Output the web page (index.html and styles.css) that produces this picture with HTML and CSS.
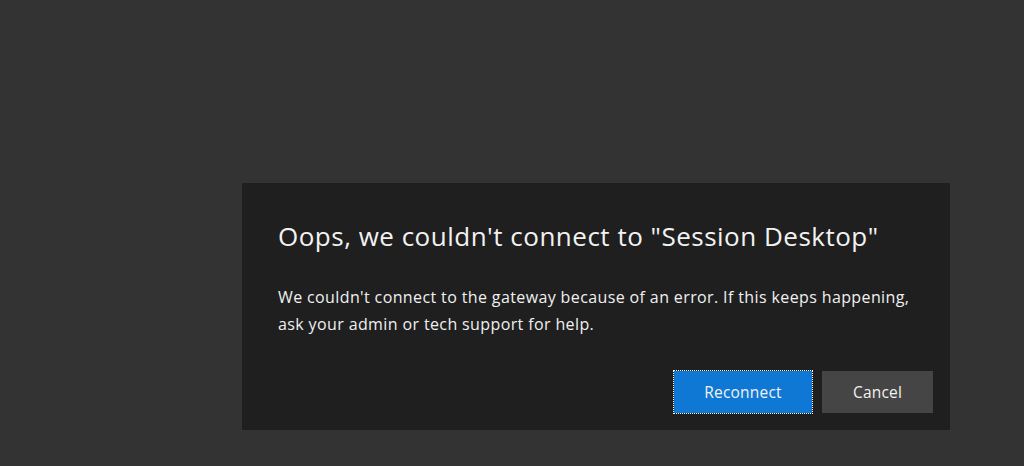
FILE: index.html
```html
<!DOCTYPE html>
<html lang="en">
<head>
<meta charset="utf-8">
<title>Connection error</title>
<link rel="stylesheet" href="styles.css">
</head>
<body>
<div class="stage">
  <div class="dialog" role="dialog" aria-labelledby="dlg-title">
    <h1 class="dialog-title" id="dlg-title">Oops, we couldn't connect to "Session Desktop"</h1>
    <p class="dialog-text">We couldn't connect to the gateway because of an error. If this keeps happening, ask your admin or tech support for help.</p>
    <div class="dialog-actions">
      <button class="btn btn-primary">Reconnect</button>
      <button class="btn btn-secondary">Cancel</button>
    </div>
  </div>
</div>
</body>
</html>
```

FILE: styles.css
```css
html, body {
  margin: 0;
  padding: 0;
  height: 100%;
}
body {
  background: #333333;
  font-family: "Open Sans", "Noto Sans", "Liberation Sans", sans-serif;
  overflow: hidden;
}
.stage {
  padding: 183px 0 0 242px;
}
.dialog {
  box-sizing: border-box;
  width: 708px;
  height: 247px;
  background: #1f1f1f;
  padding: 33px 36px 0 36px;
  display: flex;
  flex-direction: column;
}
.dialog-title {
  margin: 0;
  font-size: 26px;
  letter-spacing: 0.5px;
  font-weight: 400;
  color: #f2f2f2;
  line-height: 40px;
  white-space: nowrap;
}
.dialog-text {
  margin: 28px 0 0 0;
  font-size: 16px;
  letter-spacing: 0.38px;
  line-height: 27px;
  color: #f0f0f0;
}
.dialog-actions {
  display: flex;
  justify-content: flex-end;
  gap: 10px;
  margin-top: 33px;
  margin-right: -19px;
}
.btn {
  height: 42px;
  border: 0;
  font-family: inherit;
  font-size: 15.5px;
  letter-spacing: 0.2px;
  color: #f2f2f2;
  padding: 0;
}
.btn-primary {
  width: 138px;
  background: #0f78d4;
  outline: 1px dotted #ffffff;
  outline-offset: 0;
}
.btn-secondary {
  width: 111px;
  background: #454545;
}
```
